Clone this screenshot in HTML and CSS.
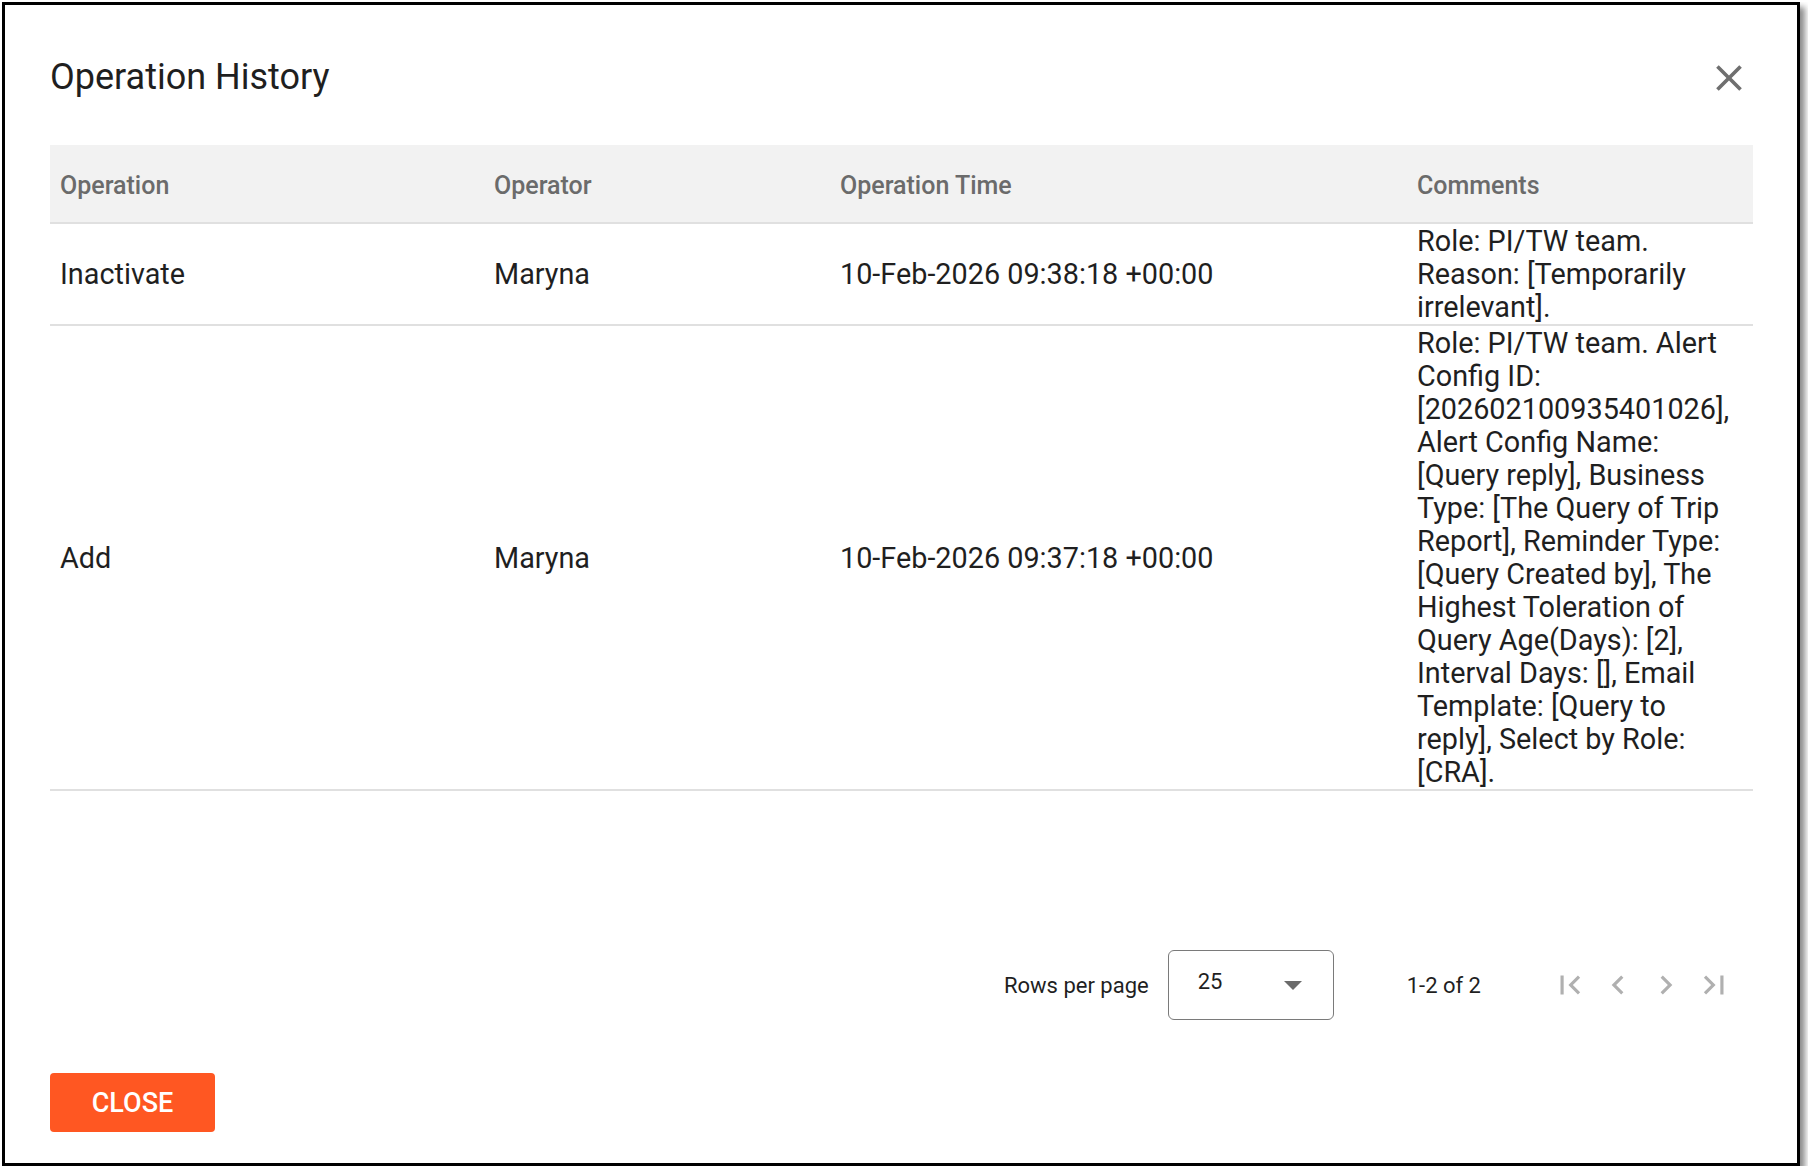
FILE: index.html
```html
<!DOCTYPE html>
<html>
<head>
    <meta charset="UTF-8">
    <title>Operation History</title>
    <link rel="stylesheet" href="styles.css">
</head>
<body>
    <div class="dialog">
        <div class="dialog-title">
            <h2>Operation History</h2>
            <button class="close-x" aria-label="close">
                <svg viewBox="0 0 24 24"><path d="M19 6.41L17.59 5 12 10.59 6.41 5 5 6.41 10.59 12 5 17.59 6.41 19 12 13.41 17.59 19 19 17.59 13.41 12z"/></svg>
            </button>
        </div>

        <div class="table-wrap">
            <table class="history">
                <colgroup>
                    <col class="col-op">
                    <col class="col-user">
                    <col class="col-time">
                    <col class="col-comments">
                </colgroup>
                <thead>
                    <tr>
                        <th>Operation</th>
                        <th>Operator</th>
                        <th>Operation Time</th>
                        <th>Comments</th>
                    </tr>
                </thead>
                <tbody>
                    <tr>
                        <td>Inactivate</td>
                        <td>Maryna</td>
                        <td>10-Feb-2026 09:38:18 +00:00</td>
                        <td class="comments">Role: PI/TW team. Reason: [Temporarily irrelevant].</td>
                    </tr>
                    <tr>
                        <td>Add</td>
                        <td>Maryna</td>
                        <td>10-Feb-2026 09:37:18 +00:00</td>
                        <td class="comments">Role: PI/TW team. Alert Config ID: [202602100935401026], Alert Config Name: [Query reply], Business Type: [The Query of Trip Report], Reminder Type: [Query Created by], The Highest Toleration of Query Age(Days): [2], Interval Days: [], Email Template: [Query to reply], Select by Role: [CRA].</td>
                    </tr>
                </tbody>
            </table>
        </div>

        <div class="pagination">
            <span class="rows-label">Rows per page</span>
            <div class="select">
                <span>25</span>
                <span class="caret"></span>
            </div>
            <span class="range">1-2 of 2</span>
            <button class="page-btn" disabled>
                <svg viewBox="0 0 24 24"><path d="M18.41 16.59L13.82 12l4.59-4.59L17 6l-6 6 6 6zM6 6h2v12H6z"/></svg>
            </button>
            <button class="page-btn" disabled>
                <svg viewBox="0 0 24 24"><path d="M15.41 16.59L10.83 12l4.58-4.59L14 6l-6 6 6 6 1.41-1.41z"/></svg>
            </button>
            <button class="page-btn" disabled>
                <svg viewBox="0 0 24 24"><path d="M8.59 16.59L13.17 12 8.59 7.41 10 6l6 6-6 6-1.41-1.41z"/></svg>
            </button>
            <button class="page-btn" disabled>
                <svg viewBox="0 0 24 24"><path d="M5.59 7.41L10.18 12l-4.59 4.59L7 18l6-6-6-6zM16 6h2v12h-2z"/></svg>
            </button>
        </div>

        <div class="actions">
            <button class="btn-close">CLOSE</button>
        </div>
    </div>
</body>
</html>
```

FILE: styles.css
```css
* {
    box-sizing: border-box;
}
body {
    margin: 2px;
    font-family: Roboto, "Noto Sans", Arial, sans-serif;
    color: rgba(0, 0, 0, 0.87);
    background: #fff;
}
.dialog {
    width: 1798px;
    height: 1164px;
    border: 3px solid #000;
    box-shadow: 5px 5px 6px rgba(0, 0, 0, 0.45);
    background: #fff;
    padding: 23px 44px 31px 45px;
    display: flex;
    flex-direction: column;
}
.dialog-title {
    display: flex;
    align-items: center;
    justify-content: space-between;
    height: 97px;
    margin-bottom: 20px;
}
.dialog-title h2 {
    margin: 0;
    font-size: 36px;
    font-weight: 400;
    color: #1f1f1f;
}
.close-x {
    width: 44px;
    height: 44px;
    margin: 2px 2px 0 0;
    padding: 0;
    border: none;
    background: none;
    cursor: pointer;
}
.close-x svg {
    width: 44px;
    height: 44px;
    fill: #6f6f6f;
    display: block;
}
.table-wrap {
    flex: 1;
}
.history {
    width: 100%;
    border-collapse: collapse;
    table-layout: fixed;
}
.col-op { width: 434px; }
.col-user { width: 346px; }
.col-time { width: 577px; }
.col-comments { width: 346px; }
.history th {
    height: 78px;
    padding: 4px 10px 0;
    text-align: left;
    font-size: 25px;
    font-weight: 500;
    color: #6b6b6b;
    background: #f2f2f2;
    border-bottom: 2px solid #e0e0e0;
}
.history td {
    padding: 1px 10px 0;
    font-size: 28.8px;
    line-height: 33px;
    color: #1f1f1f;
    vertical-align: middle;
    border-bottom: 2px solid #e0e0e0;
}
.history td.comments {
    padding-right: 12px;
}
.pagination {
    display: flex;
    justify-content: flex-end;
    align-items: center;
    height: 70px;
    padding-right: 15px;
    font-size: 22px;
    color: #1f1f1f;
}
.rows-label {
    margin-right: 19px;
}
.select {
    width: 166px;
    height: 70px;
    border: 1.5px solid #7a7a7a;
    border-radius: 6px;
    display: flex;
    align-items: center;
    padding: 0 31px 7px 29px;
}
.caret {
    margin-left: auto;
    width: 0;
    height: 0;
    border-left: 9px solid transparent;
    border-right: 9px solid transparent;
    border-top: 9px solid #6b6b6b;
    margin-top: 7px;
}
.range {
    margin-left: 73px;
    margin-right: 65px;
}
.page-btn {
    width: 48px;
    height: 48px;
    padding: 0;
    border: none;
    background: none;
    display: flex;
    align-items: center;
    justify-content: center;
}
.page-btn svg {
    width: 38px;
    height: 38px;
    fill: #b0b0b0;
}
.actions {
    margin-top: 53px;
}
.btn-close {
    width: 165px;
    height: 59px;
    border: none;
    border-radius: 4px;
    background: #ff5722;
    color: #fff;
    font-family: Roboto, "Noto Sans", Arial, sans-serif;
    font-size: 27px;
    font-weight: 500;
    cursor: pointer;
}
```
